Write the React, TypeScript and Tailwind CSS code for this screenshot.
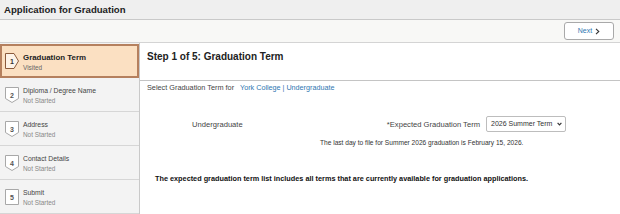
import React from 'react';

// ============================================================
// STEP ICON — arrow / shield / square badge with step number
// ============================================================

type IconKind = 'arrow' | 'shield' | 'square';

function StepIcon({ n, kind, active }: { n: number; kind: IconKind; active?: boolean }) {
  const stroke = active ? '#8a5a3c' : '#a8a8a8';
  const fill = active ? '#fdf3e8' : '#ffffff';
  const d =
    kind === 'arrow' ? 'M0.5,0.5 L9,0.5 L13.5,8 L9,15.5 L0.5,15.5 Z' :
    kind === 'shield' ? 'M0.5,0.5 L13.5,0.5 L13.5,11.5 L7,15.5 L0.5,11.5 Z' :
    'M0.5,0.5 L13.5,0.5 L13.5,15.5 L0.5,15.5 Z';
  return (
    <div className="relative w-[14px] h-[16px] shrink-0">
      <svg width={14} height={16} className="absolute inset-0">
        <path d={d} fill={fill} stroke={stroke} strokeWidth="1" />
      </svg>
      <span
        className={`absolute left-0 top-[5px] w-[14px] text-center text-[7px] font-bold leading-none ${
          active ? 'text-[#333333]' : 'text-[#555555]'
        }`}
      >
        {n}
      </span>
    </div>
  );
}

const steps: { title: string; status: string; kind: IconKind }[] = [
  { title: 'Graduation Term', status: 'Visited', kind: 'arrow' },
  { title: 'Diploma / Degree Name', status: 'Not Started', kind: 'shield' },
  { title: 'Address', status: 'Not Started', kind: 'shield' },
  { title: 'Contact Details', status: 'Not Started', kind: 'shield' },
  { title: 'Submit', status: 'Not Started', kind: 'square' },
];

export default function App() {
  return (
    <div className="w-[620px] h-[214px] overflow-hidden bg-white font-['Liberation_Sans',Arial,sans-serif] text-[#333333]">
      {/* Page title */}
      <div className="h-[20px] bg-[#efefef] border-b border-[#c9c9c9] flex items-center px-[4px]">
        <span className="text-[9.6px] font-bold text-[#222222] leading-none">Application for Graduation</span>
      </div>

      {/* Toolbar */}
      <div className="h-[23px] bg-[#f8f8f6] border-b border-[#d4d4d4] flex items-center justify-end pr-[6px]">
        <button className="h-[18px] w-[50px] bg-white border border-[#a9a9a9] rounded-[3px] flex items-center justify-center gap-[3px] text-[7px] text-[#2f77b1]">
          Next
          <svg width={5} height={7} viewBox="0 0 5 7">
            <path d="M1,0.8 L3.8,3.5 L1,6.2" fill="none" stroke="#333333" strokeWidth="1.1" />
          </svg>
        </button>
      </div>

      <div className="flex h-[171px]">
        {/* Left step navigation */}
        <div className="w-[140px] shrink-0 bg-[#f3f3f3] border-r border-[#c9c9c9] flex flex-col pt-[1px]">
          {steps.map((s, i) => {
            const active = i === 0;
            return (
              <div
                key={s.title}
                className={`h-[34px] flex items-center gap-[4px] shrink-0 ${
                  active
                    ? 'bg-[#fbe0c2] border-[2px] border-[#b5805e] pl-[3px]'
                    : 'border-b border-[#d6d6d6] pl-[5px]'
                }`}
              >
                <StepIcon n={i + 1} kind={s.kind} active={active} />
                <div className="flex flex-col leading-none mt-[3px]">
                  <span className={active ? 'text-[7.9px] font-bold text-[#222222]' : 'text-[6.8px] text-[#444444]'}>
                    {s.title}
                  </span>
                  <span className={`text-[6.4px] mt-[3px] ${active ? 'text-[#666666]' : 'text-[#888888]'}`}>{s.status}</span>
                </div>
              </div>
            );
          })}
        </div>

        {/* Main content */}
        <div className="flex-1 flex flex-col">
          <div className="h-[38px] pl-[7px] pt-[9px] border-b border-[#c4c4c4] text-[10px] leading-none">
            <span className="font-bold text-[#222222]">Step 1 of 5: Graduation Term</span>
          </div>
          <div className="flex items-center pl-[7px] pt-[3px] text-[7.3px] leading-none">
            <span className="text-[#444444]">Select Graduation Term for</span>
            <span className="text-[#2f77b1] ml-[6px] text-[7.2px]">York College | Undergraduate</span>
          </div>

          <div className="flex items-center mt-[25px] h-[16px]">
            <span className="ml-[52px] text-[7.6px] text-[#444444]">Undergraduate</span>
            <span className="ml-auto text-[7.6px] text-[#444444]">*Expected Graduation Term</span>
            <div className="ml-[6px] mr-[54px] w-[80px] h-[16px] border border-[#bdbdbd] rounded-[2px] bg-white flex items-center justify-between pl-[4px] pr-[3px]">
              <span className="text-[7px] text-[#333333]">2026 Summer Term</span>
              <svg width={5} height={4} viewBox="0 0 5 4">
                <path d="M0.6,0.8 L2.5,2.8 L4.4,0.8" fill="none" stroke="#333333" strokeWidth="1.2" />
              </svg>
            </div>
          </div>
          <div className="pl-[180px] mt-[8px] text-[6.6px] text-[#333333] leading-none">
            The last day to file for Summer 2026 graduation is February 15, 2026.
          </div>

          <div className="pl-[15px] mt-[28px] text-[7.3px] font-bold text-[#111111] leading-none">
            The expected graduation term list includes all terms that are currently available for graduation applications.
          </div>
        </div>
      </div>
    </div>
  );
}
